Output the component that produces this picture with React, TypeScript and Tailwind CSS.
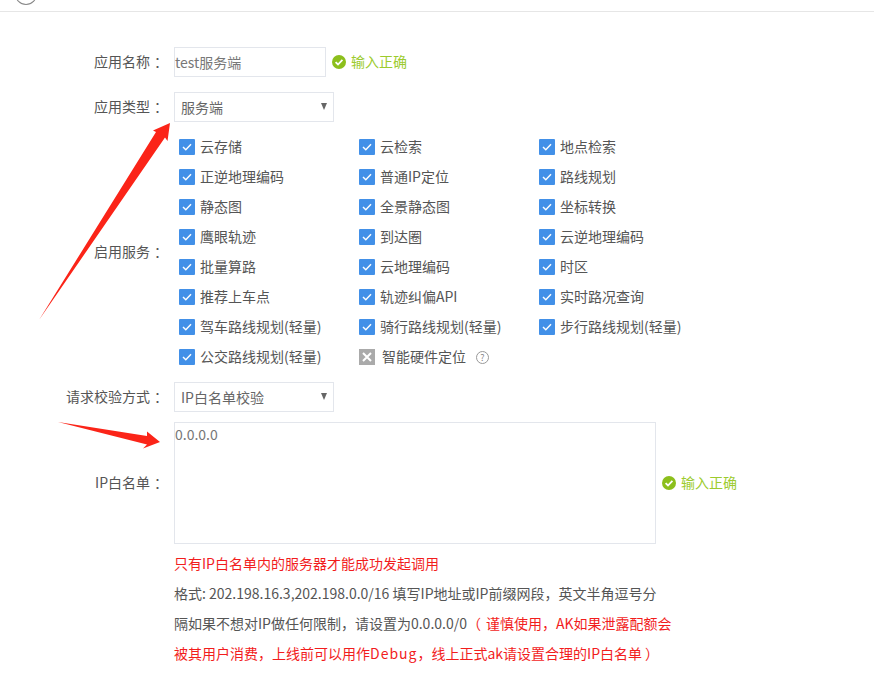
const font = { fontFamily: '"Noto Sans CJK SC", sans-serif' };

const services: string[] = [
  "云存储", "云检索", "地点检索",
  "正逆地理编码", "普通IP定位", "路线规划",
  "静态图", "全景静态图", "坐标转换",
  "鹰眼轨迹", "到达圈", "云逆地理编码",
  "批量算路", "云地理编码", "时区",
  "推荐上车点", "轨迹纠偏API", "实时路况查询",
  "驾车路线规划(轻量)", "骑行路线规划(轻量)", "步行路线规划(轻量)",
  "公交路线规划(轻量)",
];

function Check() {
  return (
    <span className="flex h-4 w-4 shrink-0 items-center justify-center rounded-[1px] bg-[#4290e8]">
      <svg width="10" height="8" viewBox="0 0 10 8" fill="none">
        <path d="M1 4l2.8 2.8L9 1.2" stroke="#fff" strokeWidth="1.4" />
      </svg>
    </span>
  );
}

function Ok() {
  return (
    <span className="flex items-center gap-[5px] text-[14px] text-[#9ccb2e]">
      <svg width="14" height="14" viewBox="0 0 14 14">
        <circle cx="7" cy="7" r="7" fill="#8cbf1c" />
        <path d="M3.6 7.2l2.4 2.3 4.4-4.6" stroke="#fff" strokeWidth="1.8" fill="none" />
      </svg>
      <span className="pb-[2px]">输入正确</span>
    </span>
  );
}

function Label({ children }: { children: string }) {
  return (
    <div className="w-[168px] shrink-0 pb-[2px] text-right text-[14px] text-[#555]">
      {children}
      <span className="ml-[4px]">：</span>
    </div>
  );
}

function Select({ value }: { value: string }) {
  return (
    <div className="flex h-[30px] w-[160px] items-center justify-between border border-[#e3e6ec] pl-[6px] pr-[6px] text-[14px] text-[#666]">
      <span>{value}</span>
      <svg className="mb-[1px]" width="6" height="7" viewBox="0 0 6 7">
        <path d="M0 0h6L3 7z" fill="#666" />
      </svg>
    </div>
  );
}

export default function App() {
  return (
    <div className="relative h-[683px] w-[896px] overflow-hidden bg-white" style={font}>
      <div className="relative h-[12px] w-[874px] border-b border-[#e6e6e6]">
        <div className="absolute left-[15px] top-[-12px] h-[17px] w-[22px] rounded-b-full border border-t-0 border-[#888]" />
      </div>

      <div className="flex flex-col pt-[35px]">
        <div className="flex h-[30px] items-center">
          <Label>应用名称</Label>
          <div className="ml-[6px] flex h-[30px] w-[152px] items-center border border-[#e3e6ec] text-[14px] text-[#777]">
            test服务端
          </div>
          <div className="ml-[6px]"><Ok /></div>
        </div>

        <div className="mt-[15px] flex h-[30px] items-center">
          <Label>应用类型</Label>
          <div className="ml-[6px]"><Select value="服务端" /></div>
        </div>

        <div className="mt-[10px] flex items-center">
          <Label>启用服务</Label>
          <div className="ml-[11px] grid w-[540px] grid-cols-3 auto-rows-[30px] items-center text-[14px] text-[#555]">
            {services.map((s) => (
              <div key={s} className="flex items-center gap-[5px]">
                <Check />
                <span className="pb-[2px]">{s}</span>
              </div>
            ))}
            <div className="flex items-center">
              <span className="flex h-4 w-4 items-center justify-center bg-[#aaa]">
                <svg width="10" height="10" viewBox="0 0 10 10">
                  <path d="M1 1l8 8M9 1L1 9" stroke="#fff" strokeWidth="2" />
                </svg>
              </span>
              <span className="ml-[7px] pb-[2px]">智能硬件定位</span>
              <span className="ml-[10px] flex h-[13px] w-[13px] items-center justify-center rounded-full border border-[#999] text-[9px] leading-none text-[#888]">?</span>
            </div>
          </div>
        </div>

        <div className="mt-[10px] flex h-[30px] items-center">
          <Label>请求校验方式</Label>
          <div className="ml-[6px]"><Select value="IP白名单校验" /></div>
        </div>

        <div className="mt-[10px] flex items-center">
          <Label>IP白名单</Label>
          <div className="ml-[6px] h-[122px] w-[482px] border border-[#e3e6ec] text-[14px] leading-[22px] text-[#777]">
            0.0.0.0
          </div>
          <div className="ml-[6px]"><Ok /></div>
        </div>

        <div className="ml-[174px] mt-[4px] w-[530px] text-[14px] leading-[30px] text-[#555]">
          <div className="text-[#f21d1d]">只有IP白名单内的服务器才能成功发起调用</div>
          <div>格式: 202.198.16.3,202.198.0.0/16 填写IP地址或IP前缀网段，英文半角逗号分</div>
          <div>
            隔如果不想对IP做任何限制，请设置为0.0.0.0/0
            <span className="text-[#f21d1d]">（<span className="ml-[5px]">谨慎使用，AK如果泄露配额会</span></span>
          </div>
          <div className="text-[#f21d1d]">
            被其用户消费，上线前可以用作<span className="tracking-[1px]">Debug</span>，线上正式ak请设置合理的IP白名单<span className="ml-[3px]">）</span>
          </div>
        </div>
      </div>

      <svg className="absolute left-0 top-0" width="200" height="460" viewBox="0 0 200 460">
        <path d="M170 123L153 130.5L156 132L39 320L165 137.5L167.5 141Z" fill="#fb2418" />
        <path d="M160 442L147 431.5L147 436L58 422L147 444.5L143 448.5Z" fill="#fb2418" />
      </svg>
    </div>
  );
}
